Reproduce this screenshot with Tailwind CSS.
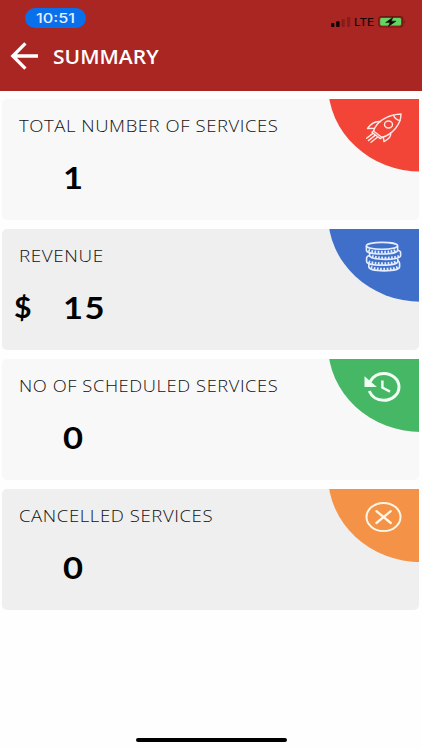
<!DOCTYPE html>
<html lang="en">

<head>
    <meta charset="UTF-8">
    <meta name="viewport" content="width=device-width, initial-scale=1.0">
    <title>Summary</title>
    <script src="https://cdn.jsdelivr.net/npm/@tailwindcss/browser@4"></script>
</head>

<body class="bg-[#fefefe] h-[750px] overflow-hidden flex flex-col font-['Open_Sans','Noto_Sans',sans-serif]">
    <header class="bg-[#aa2623] h-[91px] shrink-0 flex flex-col">
        <!-- Status bar -->
        <div class="h-9 flex items-start justify-between pl-[25px] pr-4 pt-2">
            <div class="w-[61px] h-5 rounded-full bg-[#0a6fea] flex items-center justify-center">
                <span class="inline-block scale-x-[1.25] text-[#e4f0ff] text-[13px] leading-5 font-medium font-[Inter,sans-serif]">10:51</span>
            </div>
            <div class="flex items-center h-[27px]">
                <svg class="w-5 h-3" viewBox="0 0 20 12">
                    <rect x="0" y="7" width="3.4" height="4" rx=".8" fill="#100303" />
                    <rect x="5.2" y="5.2" width="3.4" height="5.8" rx=".8" fill="#100303" />
                    <rect x="10.6" y="3" width="3.2" height="8" rx=".8" fill="#851d1b" />
                    <rect x="16" y="1" width="3.2" height="10" rx=".8" fill="#851d1b" />
                </svg>
                <span class="inline-block w-[20px] ml-[3px] mt-px origin-left scale-x-[1.05] text-[#180505] text-[11px] leading-none font-medium font-[Inter,sans-serif]">LTE</span>
                <svg class="w-7 h-3 ml-[4px]" viewBox="0 0 28 12">
                    <rect x=".7" y=".6" width="24" height="10.4" rx="2.8" fill="#aa2623" stroke="#701714" stroke-width="1.2" />
                    <rect x="2.2" y="2.1" width="20.8" height="7.4" rx="1.4" fill="#62d562" />
                    <path d="M26.2 4.2c1.2.4 1.2 2.8 0 3.2z" fill="#701714" />
                    <path d="M14.8 1.4 7.6 6.6h4.4l-1.6 3.8 7.6-5.2h-4.6z" fill="#160606" stroke="#160606" stroke-width=".5" />
                </svg>
            </div>
        </div>
        <!-- Title -->
        <div class="flex items-center pl-[10px] h-10">
            <svg class="w-7 h-7" viewBox="0 0 28 28" fill="none" stroke="#fff" stroke-width="3.3">
                <path d="M15.4 1.4 2.8 14l12.6 12.6M2.6 14H28" />
            </svg>
            <h1 class="ml-[15px] mt-[2px] origin-left scale-x-[1.05] text-white text-[20px] leading-7 font-semibold">SUMMARY</h1>
        </div>
    </header>

    <main class="flex flex-col gap-[9.2px] pt-[7.6px] pl-[2px] pr-[3px]">
        <section class="h-[121px] bg-[#f8f8f8] rounded-[5px] flex justify-between">
            <div class="pl-[17px] pt-[15px]">
                <h2 class="origin-left scale-x-[1.155] text-[#111] text-[16px] leading-6 font-light tracking-[.5px] whitespace-nowrap">TOTAL NUMBER OF SERVICES</h2>
                <p class="mt-[19px] pl-[44px] text-black text-[30px] leading-10 font-bold font-[Lato,sans-serif]"><span class="inline-block origin-left scale-x-[1.15]">1</span></p>
            </div>
            <div class="w-[90px] h-[73px] bg-[#f24437] [clip-path:ellipse(93px_87px_at_92px_-14px)] pl-[36px] pt-[13px]">
                <svg class="w-[38px] h-8" viewBox="0 0 38 32" fill="none" stroke="#ffe9e5" stroke-width="1.4" stroke-linejoin="round" stroke-linecap="round">
                    <path d="M8.5 19C11 11 20 3 36 2C36 12 28 22 17 25.5Z" />
                    <path d="M28.5 3.2C29.5 6 32 8 35 8.6" />
                    <ellipse cx="23.5" cy="12.5" rx="4" ry="3.5" />
                    <path d="M15.5 9.6C10 9 6 11.5 2.5 16.5L9.3 16.4M25.6 20.8C26.5 24 23 27.5 19 29.6L18.3 24.8" />
                    <path d="M8.8 18.8 6.9 20.2l8.4 6.4 1.8-1.4M7.6 21.6 1.6 26.2M10 23.4 3.4 28.6M12.4 25.2l-6.4 5" />
                </svg>
            </div>
        </section>

        <section class="h-[121px] bg-[#efefef] rounded-[5px] flex justify-between">
            <div class="pl-[17px] pt-[15px]">
                <h2 class="origin-left scale-x-[1.18] text-[#111] text-[16px] leading-6 font-light tracking-[.5px] whitespace-nowrap">REVENUE</h2>
                <p class="mt-[19px] -ml-[5px] flex text-black text-[30px] leading-10 font-bold font-[Lato,sans-serif]">
                    <span class="w-[49px] text-[28px]"><span class="inline-block origin-left scale-x-[1.08]">$</span></span>
                    <span class="origin-left scale-x-[1.15] tracking-[1.4px]">15</span>
                </p>
            </div>
            <div class="w-[90px] h-[73px] bg-[#3f6fc9] [clip-path:ellipse(93px_87px_at_92px_-14px)] pl-[35px] pt-[12px]">
                <svg class="w-[38px] h-8" viewBox="0 0 38 32" fill="none" stroke="#e4edff" stroke-width="1.6">
                    <ellipse cx="18" cy="4.8" rx="15.6" ry="3.4" />
                    <path d="M2.4 4.8v4.4c0 5 31.2 5 31.2 0V4.8" />
                    <path d="M5.6 12v2.6c1 5 31 5 31 .2v-3.4c0-1.2-1.2-1.8-3-2.2" />
                    <path d="M5.6 14.4c-2 .6-3 1.4-3 2.6v3.4c0 5 31.2 5 31.2 0v-2.6" />
                    <path d="M4.8 22.6v3.2c0 5.4 30.8 5.4 30.8 0v-3.4c0-1.2-.6-2-1.8-2.6" />
                    <g stroke-width="2.6" stroke-dasharray="1.7 1.5">
                        <path d="M4.4 9.2c5 2.6 22 2.6 27.6 0" />
                        <path d="M8 15.2c5 2.4 22 2.4 27 0" />
                        <path d="M4.6 20.6c5 2.6 22 2.6 27.6 0" />
                        <path d="M6.8 26.2c5 2.6 22 2.6 27 0" />
                    </g>
                </svg>
            </div>
        </section>

        <section class="h-[121px] bg-[#f8f8f8] rounded-[5px] flex justify-between">
            <div class="pl-[17px] pt-[15px]">
                <h2 class="origin-left scale-x-[1.145] text-[#111] text-[16px] leading-6 font-light tracking-[.5px] whitespace-nowrap">NO OF SCHEDULED SERVICES</h2>
                <p class="mt-[19px] pl-[44px] text-black text-[30px] leading-10 font-bold font-[Lato,sans-serif]"><span class="inline-block origin-left scale-x-[1.15]">0</span></p>
            </div>
            <div class="w-[90px] h-[73px] bg-[#46b764] [clip-path:ellipse(93px_87px_at_92px_-14px)] pl-[35px] pt-[12px]">
                <svg class="w-[38px] h-8" viewBox="0 0 38 32" fill="none" stroke="#f0fff3" stroke-width="3">
                    <path d="M6.2 10.5C9.6 4.4 14.2 2.5 19.8 2.5C28 2.5 35 8.4 35 16S28 29.3 19.8 29.3C13 29.3 7.5 25.5 5.2 20" />
                    <path d="M.5 5.2V16h12.4z" fill="#f0fff3" stroke="none" />
                    <path d="M18.4 9.6V16.6L26 20.6" stroke-width="2.5" />
                </svg>
            </div>
        </section>

        <section class="h-[121px] bg-[#efefef] rounded-[5px] flex justify-between">
            <div class="pl-[17px] pt-[15px]">
                <h2 class="origin-left scale-x-[1.16] text-[#111] text-[16px] leading-6 font-light tracking-[.5px] whitespace-nowrap">CANCELLED SERVICES</h2>
                <p class="mt-[19px] pl-[44px] text-black text-[30px] leading-10 font-bold font-[Lato,sans-serif]"><span class="inline-block origin-left scale-x-[1.15]">0</span></p>
            </div>
            <div class="w-[90px] h-[73px] bg-[#f49347] [clip-path:ellipse(93px_87px_at_92px_-14px)] pl-[35px] pt-[12px]">
                <svg class="w-[38px] h-8" viewBox="0 0 38 32" fill="none" stroke="#fff6e4" stroke-width="2">
                    <ellipse cx="19.5" cy="16" rx="17" ry="14" />
                    <path d="M12.4 10.2 26.8 22M26.8 10.2 12.4 22" stroke-width="2.3" stroke-linecap="round" />
                </svg>
            </div>
        </section>
    </main>

    <!-- Home indicator -->
    <div class="mt-auto mb-[8px] mx-auto w-[151px] h-[4px] rounded-full bg-black"></div>
</body>

</html>
